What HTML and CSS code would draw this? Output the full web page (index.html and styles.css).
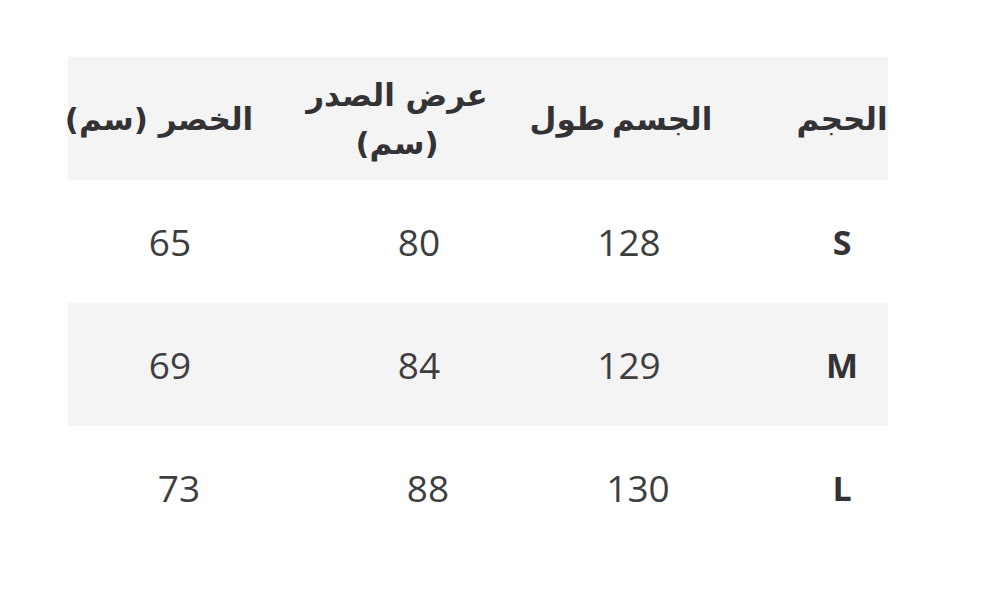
FILE: index.html
```html
<!DOCTYPE html>
<html lang="ar">
<head>
<meta charset="utf-8">
<link rel="stylesheet" href="styles.css">
</head>
<body>
<div class="page">
  <div class="table" dir="rtl">
    <div class="row head">
      <div class="cell first">الحجم</div>
      <div class="cell h2">الجسم طول</div>
      <div class="cell h3">عرض الصدر<br>(سم)</div>
      <div class="cell h4">الخصر (سم)</div>
    </div>
    <div class="row">
      <div class="cell first size">S</div>
      <div class="cell num">128</div>
      <div class="cell num">80</div>
      <div class="cell num">65</div>
    </div>
    <div class="row shade">
      <div class="cell first size">M</div>
      <div class="cell num">129</div>
      <div class="cell num">84</div>
      <div class="cell num">69</div>
    </div>
    <div class="row">
      <div class="cell first size">L</div>
      <div class="cell num shift">130</div>
      <div class="cell num shift">88</div>
      <div class="cell num shift">73</div>
    </div>
  </div>
</div>
</body>
</html>
```
FILE: styles.css
```css
html, body {
  margin: 0;
  padding: 0;
  background: #ffffff;
}
.page {
  padding: 57px 0 0 68px;
}
.table {
  width: 820px;
}
.row {
  display: grid;
  grid-template-columns: 196px 126px 294px 204px;
  height: 123px;
  align-items: center;
}
.head, .shade {
  background: #f5f4f5;
}
.cell {
  display: flex;
  flex-direction: column;
  align-items: center;
  text-align: center;
  color: #3a3a3c;
  white-space: nowrap;
}
.cell.first {
  padding-left: 104px;
}
.head .cell {
  font-family: "DejaVu Sans", sans-serif;
  font-weight: bold;
  font-size: 31px;
  line-height: 48px;
  color: #333335;
}
.head .h2 {
  padding-right: 16px;
  word-spacing: -4px;
}
.head .h3 {
  padding-right: 44px;
}
.head .h4 {
  padding-right: 22px;
}
.num {
  font-family: "Open Sans", sans-serif;
  font-size: 37px;
  color: #3e3e40;
}
.size {
  font-family: "Open Sans", sans-serif;
  font-weight: bold;
  font-size: 34px;
  color: #333335;
}
.shift {
  padding-left: 18px;
}
```
